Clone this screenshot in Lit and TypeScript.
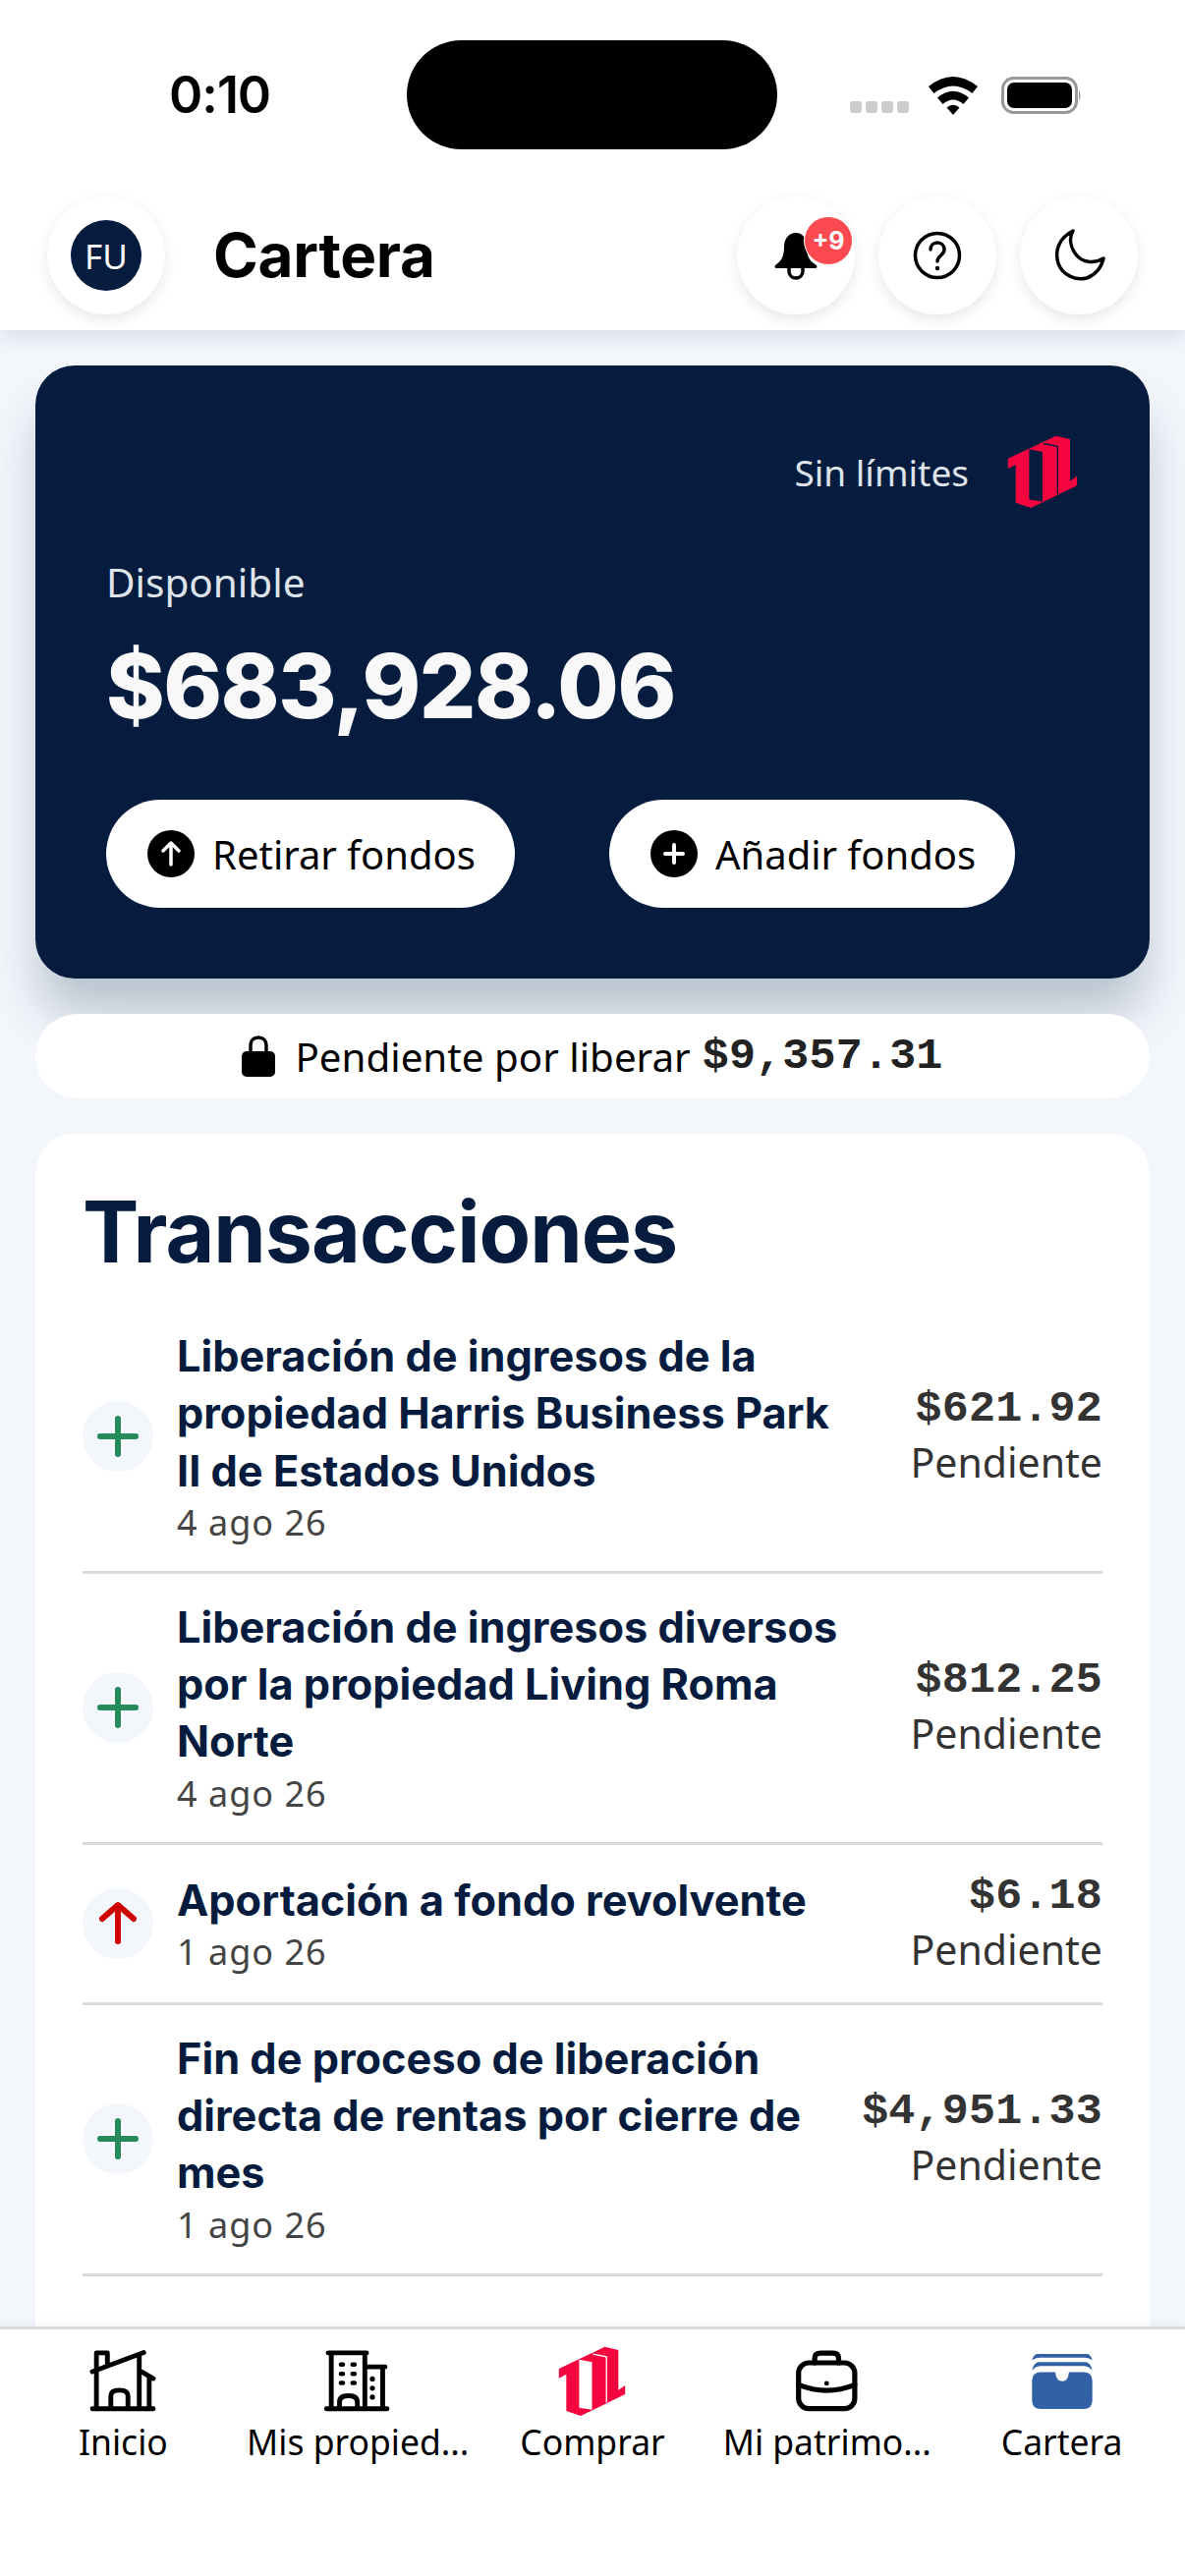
import { LitElement, html, css, svg } from "lit";
import { customElement } from "lit/decorators.js";

const logo = (cut: string) => html`<svg class="logo-svg" viewBox="140 70 210 220">
  <path fill="#f5053f" fill-rule="evenodd" d="M142 140L285 72L327 82V207L348 192V220L245 270L210 287L165 272V158L142 170ZM205 112V262L245 268V120Z"/>
  <path fill="none" stroke="${cut}" stroke-width="4" d="M248 95L290 103V246"/>
</svg>`;

const rows = [
  { kind: "plus", title: ["Liberación de ingresos de la", "propiedad Harris Business Park", "II de Estados Unidos"], date: "4 ago 26", amount: "$621.92" },
  { kind: "plus", title: ["Liberación de ingresos diversos", "por la propiedad Living Roma", "Norte"], date: "4 ago 26", amount: "$812.25" },
  { kind: "up", title: ["Aportación a fondo revolvente"], date: "1 ago 26", amount: "$6.18" },
  { kind: "plus", title: ["Fin de proceso de liberación", "directa de rentas por cierre de", "mes"], date: "1 ago 26", amount: "$4,951.33" },
];

const homeIcon = html`<svg class="nav-svg" viewBox="90 65 210 195" fill="none" stroke="#000" stroke-width="14" stroke-linecap="round" stroke-linejoin="round">
  <path d="M106 242H284M118 135V242M243 88V242M106 134L256 78M118 128V79H150V114M250 134L284 154M272 152V242M160 242V205Q160 188 185 188T210 205V242"/></svg>`;

const buildingIcon = html`<svg class="nav-svg" viewBox="810 65 210 195" fill="none" stroke="#000" stroke-width="14" stroke-linecap="round" stroke-linejoin="round">
  <path d="M829 79H941M838 79V242M936 79V242M824 242H1001M940 120H995M988 120V242M862 242V222Q862 204 888 204T914 222V242"/>
  <path stroke-width="13" d="M866 113H872M900 113H906M866 140H872M900 140H906M866 167H872M900 167H906"/>
  <path stroke-width="15" d="M958 155V155.100M958 182V182.100M958 208V208.100"/></svg>`;

const caseIcon = html`<svg class="nav-svg" viewBox="200 65 210 195" fill="none" stroke="#000" stroke-width="15" stroke-linecap="round" stroke-linejoin="round">
  <path d="M268 108V96Q268 80 285 80H322Q338 80 338 96V108"/>
  <rect x="221" y="108" width="164" height="134" rx="30"/>
  <path d="M221 172Q303 205 385 172"/>
  <circle cx="303" cy="168" r="7" fill="#000" stroke="none"/></svg>`;

const walletIcon = html`<svg class="nav-svg" viewBox="915 65 210 195" fill="#3361a5">
  <path d="M945 82H1095Q1104 86 1108 100Q1095 93 1085 93H955Q945 93 932 100Q936 86 945 82Z"/>
  <path d="M950 106H1090Q1104 110 1108 130Q1098 118 1085 117H955Q942 118 932 130Q936 110 950 106Z"/>
  <path d="M958 135H1000Q1003 162 1020 162T1040 135H1082Q1108 135 1108 160V218Q1108 243 1082 243H958Q932 243 932 218V160Q932 135 958 135Z"/></svg>`;

const nav = [
  { icon: homeIcon, label: "Inicio" },
  { icon: buildingIcon, label: "Mis propied..." },
  { icon: logo("#fff"), label: "Comprar" },
  { icon: caseIcon, label: "Mi patrimo..." },
  { icon: walletIcon, label: "Cartera" },
];

const plus = svg`<path d="M18 36H54M36 18V54"/>`;
const up = svg`<path d="M36 54V18M20 31L36 17L52 31"/>`;

@customElement("app-root")
export class AppRoot extends LitElement {
  static styles = css`
    :host { display: block; width: 1206px; height: 2622px; overflow: hidden; background: #f3f7fc;
      font-family: "Noto Sans", sans-serif; color: #000; }
    .app { display: flex; flex-direction: column; height: 2622px; }
    .top { background: #fff; box-shadow: 0 6px 22px rgba(5,28,63,.12); position: relative; z-index: 2; height: 336px; flex: none; box-sizing: border-box; padding-top: 41px; }
    .status { display: flex; align-items: center; height: 111px; }
    .time { width: 414px; box-sizing: border-box; padding-left: 172px; font: 600 52px/1 "Inter", sans-serif; letter-spacing: -1px; }
    .island { width: 377px; height: 111px; background: #000; border-radius: 56px; flex: none; }
    .sys { display: flex; align-items: center; margin-left: 74px; }
    .sys svg { display: block; }
    .head { display: flex; align-items: center; gap: 24px; padding: 48px 48px 0; }
    .round { position: relative; width: 120px; height: 120px; border-radius: 50%; background: #fff; flex: none;
      box-shadow: 0 5px 14px rgba(5,28,63,.10); display: flex; align-items: center; justify-content: center; }
    .avatar { width: 72px; height: 72px; border-radius: 50%; background: #051c3f; color: #fff; display: flex; align-items: center; justify-content: center; font-size: 35px; }
    h1 { flex: 1; margin: 0 0 0 25px; font: 700 62px/1 "Inter", sans-serif; letter-spacing: -.3px; }
    .badge { position: absolute; left: 68px; top: 20px; width: 48px; height: 48px; border-radius: 50%; background: #fb4a4f; color: #fff; border: 1px solid #fff;
      display: flex; align-items: center; justify-content: center; font: 700 25px/1 "Inter", sans-serif; }
    .main { flex: 1; min-height: 0; overflow: hidden; padding: 36px 36px 0; display: flex; flex-direction: column; }
    .card { background: #051c3f; border-radius: 40px; height: 624px; box-sizing: border-box; padding: 0 73px 0 72px; flex: none;
      box-shadow: 0 40px 50px -4px rgba(5,28,63,.24); color: #fff; }
    .brand { display: flex; justify-content: flex-end; align-items: center; gap: 39px; padding-top: 72px; height: 72px; font-size: 37px; color: #dfe3ea; box-sizing: content-box; }
    .brand .logo-svg { width: 72px; height: 75px; }
    .logo-svg { display: block; }
    .label { margin: 49px 0 0; font-size: 40.500px; line-height: 56px; color: #dfe3ea; }
    .amount { margin: 22px 0 0; font: 800 90.500px/110px "Inter", sans-serif; letter-spacing: -1.500px; color: #f8f8f8; }
    .actions { display: flex; gap: 96px; margin-top: 61px; }
    .btn { height: 110px; border-radius: 55px; background: #fff; color: #000; box-sizing: border-box; padding: 0 40px 0 42px; display: flex; align-items: center; gap: 18px; font-size: 40px; white-space: nowrap; }
    .btn svg { width: 48px; height: 48px; display: block; }
    .pill { margin-top: 36px; height: 86px; border-radius: 43px; background: #fff; display: flex; align-items: center; justify-content: center; gap: 20px; font-size: 40.300px; flex: none; position: relative; }
    .pill svg { width: 34px; height: 42px; display: block; }
    .mono { font-family: "Liberation Mono", monospace; font-weight: 700; font-size: 45px; color: #222; }
    .pill .mono { margin-left: -8px; letter-spacing: .2px; }
    .list { margin-top: 36px; background: #fff; border-radius: 40px 40px 0 0; padding: 50px 48px 0; flex: 1; position: relative; }
    h2 { margin: 0 0 22px; font: 700 86px/100px "Inter", sans-serif; color: #051c3f; letter-spacing: -1px; }
    .row { display: flex; align-items: center; padding: 25px 0; border-bottom: 3px solid #d9d9d9; }
    .ico { width: 72px; height: 72px; border-radius: 50%; background: #f3f7fc; flex: none; margin-right: 24px; }
    .ico svg { width: 72px; height: 72px; display: block; fill: none; stroke-width: 6; stroke-linecap: round; stroke-linejoin: round; }
    .ico.plus svg { stroke: #268a5a; }
    .ico.up svg { stroke: #d00000; }
    .txt { flex: 1; min-width: 0; }
    .tt { font: 700 43.300px/58.300px "Inter", sans-serif; color: #051c3f; white-space: nowrap; }
    .date { font-size: 36px; line-height: 48px; color: #444; letter-spacing: 1px; }
    .right { text-align: right; flex: none; }
    .right .mono { line-height: 55px; color: #333; display: block; letter-spacing: .2px; }
    .right .st { font-size: 41px; line-height: 52px; padding-bottom: 3px; color: #333; display: block; }
    .nav { flex: none; height: 254px; box-sizing: border-box; background: #fff; border-top: 3px solid #d9d9d9; padding: 17px 6px 0; display: grid; grid-template-columns: repeat(5, 1fr); position: relative; z-index: 2; box-shadow: 0 -4px 10px rgba(5,28,63,.04); }
    .nav-item { display: flex; flex-direction: column; align-items: center; font-size: 35.500px; line-height: 50px; white-space: nowrap; }
    .nav-icon { height: 72px; display: flex; align-items: center; justify-content: center; }
    .nav-svg { width: 74px; height: 68px; display: block; }
    .nav-icon .logo-svg { width: 69px; height: 72px; }
  `;

  render() {
    return html`<div class="app">
      <div class="top">
        <div class="status">
          <div class="time">0:10</div>
          <div class="island"></div>
          <div class="sys">
            <svg width="236" height="44" viewBox="0 0 236 44">
              <g fill="#cccccc"><rect x="0" y="28" width="12" height="12" rx="3"/><rect x="16" y="28" width="12" height="12" rx="3"/><rect x="32" y="28" width="12" height="12" rx="3"/><rect x="48" y="28" width="12" height="12" rx="3"/></g>
              <path fill="#000" d="M80 13Q105 -7 130 13L124.500 20Q105 5 85.500 20ZM89 24.500Q105 11 121 24.500L115.500 31Q105 22 94.500 31ZM98.500 34.500Q105 29 111.500 34.500L105 42Z"/>
              <rect x="155.500" y="4.500" width="75" height="35" rx="11" fill="none" stroke="#999" stroke-width="3"/>
              <rect x="160" y="9" width="66" height="26" rx="7" fill="#000"/>
              <path d="M233 16Q236 22 233 28Z" fill="#999"/>
            </svg>
          </div>
        </div>
        <div class="head">
          <div class="round"><div class="avatar">FU</div></div>
          <h1>Cartera</h1>
          <div class="round">
            <svg width="48" height="50" viewBox="0 0 48 50"><path d="M24 2C31 2 35 8 35 16C35 26 38 31 45 35C46 37 45 38 43 38H5C3 38 2 37 3 35C9 31 12 26 12 16C12 8 17 2 24 2Z"/><path d="M17 38V41C17 45 20 48 24 48S31 45 31 41V38" fill="none" stroke="#000" stroke-width="3.500"/></svg>
            <div class="badge">+9</div>
          </div>
          <div class="round">
            <svg width="50" height="50" viewBox="0 0 50 50" fill="none" stroke="#000" stroke-width="3.500" stroke-linecap="round"><circle cx="25" cy="25" r="22.500"/><path d="M18 19C18 15 21 12 25 12C29 12 32 15 32 19C32 25 25 25 25 31"/><circle cx="25" cy="38" r="1.500" fill="#000" stroke-width="1.500"/></svg>
          </div>
          <div class="round">
            <svg width="54" height="54" viewBox="0 0 54 54" fill="none" stroke="#000" stroke-width="3.500" stroke-linejoin="round"><path d="M21 2C7 9 2 22 6 35C10 47 24 53 35 50C44 47 50 39 52 30C42 36 30 34 24 26C18 18 17 9 21 2Z"/></svg>
          </div>
        </div>
      </div>

      <div class="main">
        <section class="card">
          <div class="brand"><span>Sin límites</span>${logo("#051c3f")}</div>
          <p class="label">Disponible</p>
          <div class="amount">$683,928.06</div>
          <div class="actions">
            <div class="btn"><svg viewBox="0 0 48 48"><circle cx="24" cy="24" r="24"/><path d="M24 35V14M16 21L24 13L32 21" fill="none" stroke="#fff" stroke-width="3.500" stroke-linecap="round" stroke-linejoin="round"/></svg>Retirar fondos</div>
            <div class="btn"><svg viewBox="0 0 48 48"><circle cx="24" cy="24" r="24"/><path d="M24 15V33M15 24H33" fill="none" stroke="#fff" stroke-width="4" stroke-linecap="round"/></svg>Añadir fondos</div>
          </div>
        </section>

        <div class="pill">
          <svg viewBox="0 0 34 42"><path d="M9 18V10C9 5 12 2 17 2S25 5 25 10V18" fill="none" stroke="#000" stroke-width="3.500"/><rect x="0" y="16" width="34" height="26" rx="5"/></svg>
          <span>Pendiente por liberar</span><span class="mono">$9,357.31</span>
        </div>

        <section class="list">
          <h2>Transacciones</h2>
          ${rows.map((r) => html`<div class="row">
            <div class="ico ${r.kind}"><svg viewBox="0 0 72 72">${r.kind === "plus" ? plus : up}</svg></div>
            <div class="txt">
              ${r.title.map((t) => html`<div class="tt">${t}</div>`)}
              <div class="date">${r.date}</div>
            </div>
            <div class="right"><span class="mono">${r.amount}</span><span class="st">Pendiente</span></div>
          </div>`)}
        </section>
      </div>

      <nav class="nav">
        ${nav.map((n) => html`<div class="nav-item"><div class="nav-icon">${n.icon}</div><span>${n.label}</span></div>`)}
      </nav>
    </div>`;
  }
}
